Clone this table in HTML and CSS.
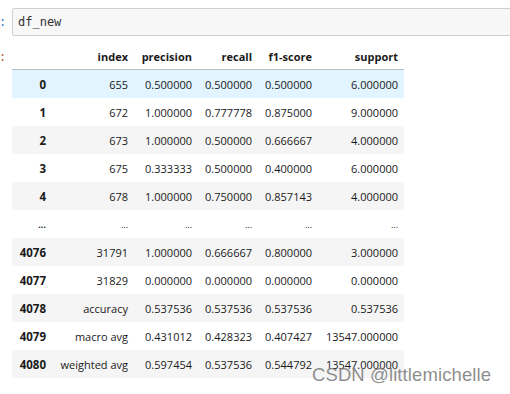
FILE: index.html
```html
<!DOCTYPE html>
<html>
<head>
<title>df_new</title>
<meta name="viewport" content="width=device-width, initial-scale=1.0">
<link rel="stylesheet" href="styles.css">
</head>
<body>

<div class="cell">
  <div class="prompt in-prompt">:</div>
  <div class="input-area">df_new</div>
</div>

<div class="cell output">
  <div class="prompt out-prompt">:</div>
  <table class="dataframe">
    <thead>
      <tr>
        <th class="c-idx"></th>
        <th class="c-index">index</th>
        <th class="c-num">precision</th>
        <th class="c-num2">recall</th>
        <th class="c-num2">f1-score</th>
        <th class="c-sup">support</th>
      </tr>
    </thead>
    <tbody>
      <tr class="hover"><th>0</th><td>655</td><td>0.500000</td><td>0.500000</td><td>0.500000</td><td>6.000000</td></tr>
      <tr><th>1</th><td>672</td><td>1.000000</td><td>0.777778</td><td>0.875000</td><td>9.000000</td></tr>
      <tr><th>2</th><td>673</td><td>1.000000</td><td>0.500000</td><td>0.666667</td><td>4.000000</td></tr>
      <tr><th>3</th><td>675</td><td>0.333333</td><td>0.500000</td><td>0.400000</td><td>6.000000</td></tr>
      <tr><th>4</th><td>678</td><td>1.000000</td><td>0.750000</td><td>0.857143</td><td>4.000000</td></tr>
      <tr class="dots"><th>...</th><td>...</td><td>...</td><td>...</td><td>...</td><td>...</td></tr>
      <tr><th>4076</th><td>31791</td><td>1.000000</td><td>0.666667</td><td>0.800000</td><td>3.000000</td></tr>
      <tr><th>4077</th><td>31829</td><td>0.000000</td><td>0.000000</td><td>0.000000</td><td>0.000000</td></tr>
      <tr><th>4078</th><td>accuracy</td><td>0.537536</td><td>0.537536</td><td>0.537536</td><td>0.537536</td></tr>
      <tr><th>4079</th><td>macro avg</td><td>0.431012</td><td>0.428323</td><td>0.407427</td><td>13547.000000</td></tr>
      <tr><th>4080</th><td>weighted avg</td><td>0.597454</td><td>0.537536</td><td>0.544792</td><td>13547.000000</td></tr>
    </tbody>
  </table>
</div>

<div class="watermark">CSDN @littlemichelle</div>

</body>
</html>
```

FILE: styles.css
```css
/* notebook cell look */
body {
  margin: 0;
  background: #fff;
  font-family: 'Open Sans', sans-serif;
  color: #1a1a1a;
  overflow: hidden;
}

.cell {
  display: flex;
  align-items: flex-start;
}

.prompt {
  width: 12px;
  flex: none;
  font-family: 'Liberation Mono', monospace;
  font-size: 12px;
  line-height: 14px;
  margin-left: -1px;
  margin-right: 1px;
}
.in-prompt {
  color: #307fc1;
  margin-top: 16px;
}
.out-prompt {
  color: #bf5b3d;
  margin-top: 15px;
}

.input-area {
  margin-top: 8px;
  flex: 1;
  height: 26px;
  margin-right: -4px;
  background: #f7f7f7;
  border: 1px solid #cfcfcf;
  border-radius: 2px;
  font-family: 'DejaVu Sans Mono', monospace;
  font-size: 12px;
  line-height: 26px;
  padding-left: 5px;
  color: #333;
}

/* dataframe table */
.dataframe {
  margin-top: 8px;
  border-collapse: collapse;
  font-size: 11px;
  table-layout: fixed;
  width: 392px;
}
.dataframe th, .dataframe td {
  text-align: right;
  padding: 0 6px;
  white-space: nowrap;
  height: 28px;
  font-weight: normal;
}
.dataframe thead th {
  font-weight: bold;
  height: 25px;
  border-bottom: 1px solid #bdbdbd;
  vertical-align: middle;
}
.dataframe tbody th {
  font-weight: bold;
  font-size: 11.5px;
}
.dataframe tbody tr:nth-child(odd) {
  background: #f5f5f5;
}
.dataframe tbody tr.hover {
  background: #e1f4ff;
}
.dataframe tr.dots td, .dataframe tr.dots th {
  font-size: 9px;
}

.c-idx { width: 28px; }
.c-index { width: 70px; }
.c-num { width: 52px; }
.c-num2 { width: 48px; }
.c-sup { width: 74px; }

.watermark {
  position: absolute;
  left: 312px;
  top: 364px;
  font-family: 'Liberation Sans', sans-serif;
  font-size: 18.5px;
  color: rgba(120, 120, 120, 0.85);
  letter-spacing: 0.1px;
}
```
